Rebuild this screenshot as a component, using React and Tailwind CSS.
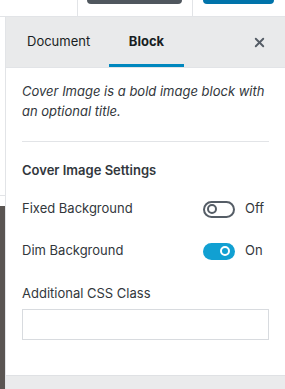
import { X } from 'lucide-react';

function Toggle({ on }) {
  if (on) {
    return (
      <span className="relative inline-flex items-center w-[32px] h-[17px] rounded-full bg-[#11a0d2]">
        <span className="absolute right-[5px] w-[10px] h-[10px] rounded-full border-[2px] border-white" />
      </span>
    );
  }
  return (
    <span className="relative inline-flex items-center w-[32px] h-[17px] rounded-full border-[2px] border-[#555d66] bg-white">
      <span className="absolute left-[2px] w-[10px] h-[10px] rounded-full border-[2px] border-[#555d66]" />
    </span>
  );
}

function ToggleRow({ label, on }) {
  return (
    <div className="flex items-center justify-between h-[20px]">
      <span className="text-[13px] text-[#32373c]">{label}</span>
      <div className="flex items-center w-[66px]">
        <Toggle on={on} />
        <span className="ml-[10px] text-[13px] text-[#32373c]">{on ? 'On' : 'Off'}</span>
      </div>
    </div>
  );
}

export default function App() {
  return (
    <div className="w-[285px] h-[389px] overflow-hidden bg-white flex flex-col" style={{ fontFamily: 'Inter, "Noto Sans", sans-serif' }}>
      {/* top toolbar edge */}
      <div className="h-[17px] flex border-b border-[#e2e4e7] shrink-0">
        <div className="w-[78px] border-r border-[#e2e4e7]" />
        <div className="w-[115px] border-r border-[#e2e4e7] pl-[9px]">
          <div className="w-[95px] h-[4px] rounded-b-[4px] bg-[#50575e]" />
        </div>
        <div className="flex-1 pl-[10px]">
          <div className="w-[71px] h-[4px] rounded-b-[4px] bg-[#0073aa]" />
        </div>
      </div>

      <div className="flex flex-1 min-h-0">
        {/* left edge strip */}
        <div className="w-[6px] border-r border-[#e2e4e7] flex flex-col shrink-0">
          <div className="h-[179px] border-b border-[#e2e4e7]" />
          <div className="h-[10px]" />
          <div className="flex-1 bg-[#5a5552]" />
        </div>

        {/* sidebar */}
        <div className="flex-1 flex flex-col">
          <div className="h-[51px] bg-[#e9eaeb] border-b border-[#e2e4e7] flex items-stretch shrink-0">
            <button className="w-[103px] text-[13px] text-[#191e23] flex items-center pl-[21px]">Document</button>
            <button className="w-[75px] text-[13px] font-bold text-[#191e23] flex items-center justify-center border-b-[3px] border-[#0087be] pt-[3px]">Block</button>
            <div className="flex-1 flex items-center justify-end pr-[18px]">
              <X size={15} strokeWidth={3} className="text-[#555d66]" />
            </div>
          </div>

          <div className="flex-1 px-[16px]">
            <p className="pt-[13px] text-[13px] leading-[20px] italic text-[#32373c]">
              Cover Image is a bold image block with an optional title.
            </p>
            <div className="mt-[20px] border-t border-[#e2e4e7]" />
            <h3 className="mt-[18px] text-[13px] font-semibold text-[#32373c] leading-[20px]">Cover Image Settings</h3>
            <div className="mt-[19px]">
              <ToggleRow label="Fixed Background" on={false} />
            </div>
            <div className="mt-[22px]">
              <ToggleRow label="Dim Background" on={true} />
            </div>
            <label className="block mt-[22px] text-[13px] leading-[20px] text-[#32373c]">Additional CSS Class</label>
            <input className="mt-[6px] w-full h-[31px] border border-[#d8dbdf] bg-white outline-none" />
          </div>

          <div className="h-[14px] bg-[#eaebec] border-t border-[#dfe1e4] shrink-0" />
        </div>
      </div>
    </div>
  );
}
